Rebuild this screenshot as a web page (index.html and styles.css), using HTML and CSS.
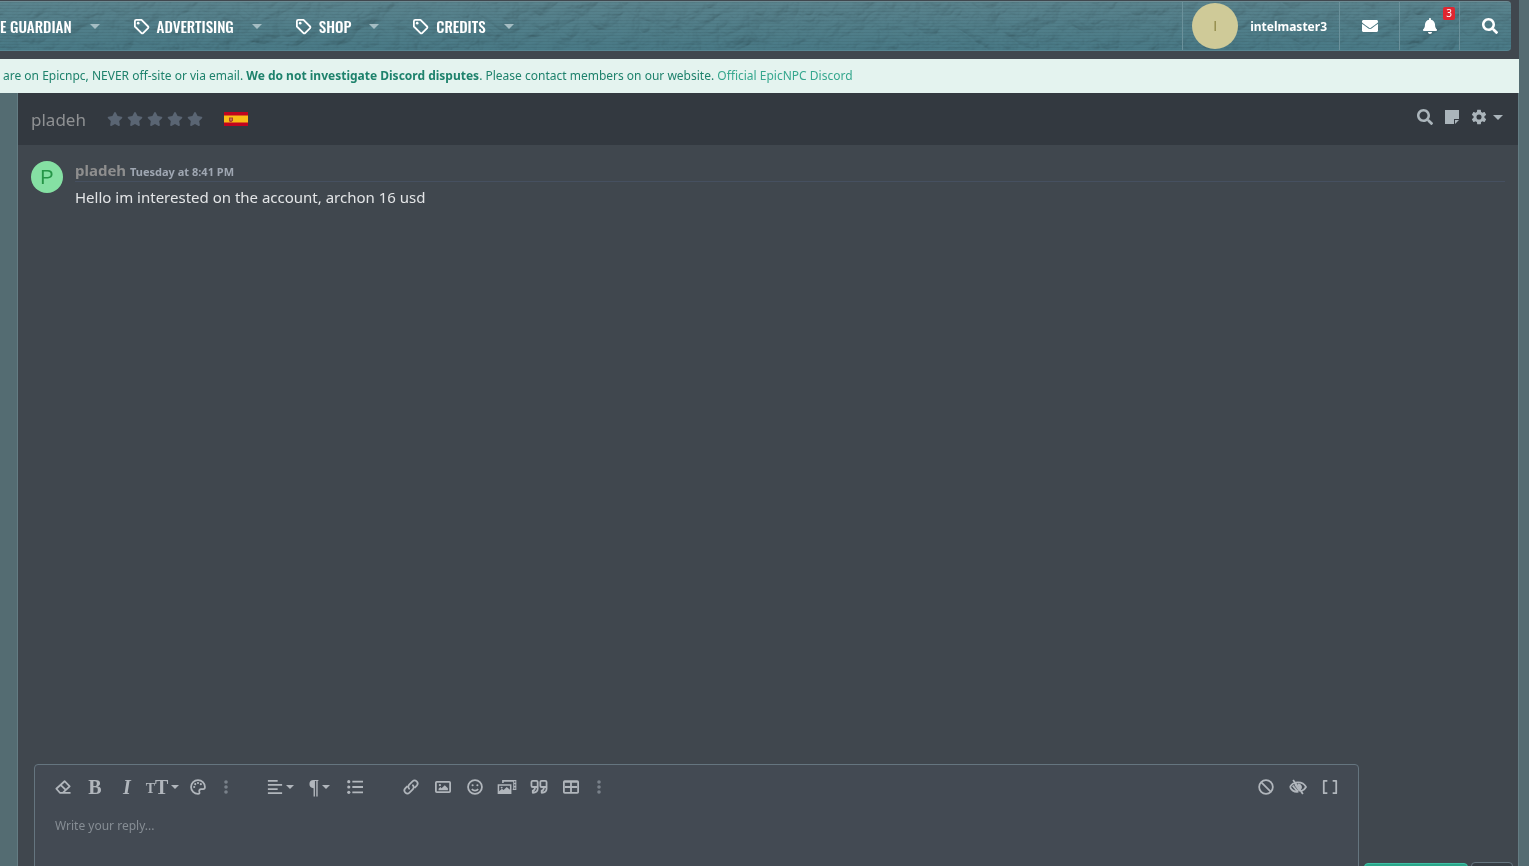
FILE: index.html
```html
<!DOCTYPE html>
<html lang="en">
<head>
    <meta charset="UTF-8">
    <meta name="viewport" content="width=device-width, initial-scale=1.0">
    <title>Conversation with pladeh | EpicNPC</title>
    <link rel="stylesheet" href="styles.css">
</head>
<body>
    <svg class="sprite" aria-hidden="true">
        <symbol id="tag" viewBox="0 0 18 18"><path d="M2 3.500A1.500 1.500 0 0 1 3.500 2H9l7 7a1.200 1.200 0 0 1 0 1.700L10.700 16a1.200 1.200 0 0 1-1.700 0L2 9z" fill="none" stroke="currentColor" stroke-width="1.900" stroke-linejoin="round"/><circle cx="5.500" cy="5.500" r="1.400"/></symbol>
        <symbol id="search" viewBox="0 0 512 512"><path d="M505 442.700L405.300 343c-4.500-4.500-10.600-7-17-7H372c27.600-35.300 44-79.700 44-128C416 93.100 322.900 0 208 0S0 93.100 0 208s93.100 208 208 208c48.300 0 92.700-16.400 128-44v16.300c0 6.400 2.500 12.500 7 17l99.700 99.700c9.400 9.400 24.600 9.400 33.900 0l28.300-28.300c9.400-9.400 9.400-24.600.1-34zM208 336c-70.700 0-128-57.200-128-128 0-70.700 57.200-128 128-128 70.700 0 128 57.200 128 128 0 70.700-57.200 128-128 128z"/></symbol>
        <symbol id="star" viewBox="0 0 576 512"><path d="M259.300 17.800L194 150.200 47.900 171.500c-26.200 3.800-36.700 36.100-17.700 54.600l105.700 103-25 145.500c-4.500 26.300 23.200 46 46.400 33.700L288 439.600l130.700 68.700c23.200 12.200 50.900-7.400 46.400-33.700l-25-145.500 105.700-103c19-18.500 8.500-50.800-17.700-54.600L382 150.200 316.700 17.800c-11.700-23.600-45.600-23.900-57.400 0z"/></symbol>
        <symbol id="dots" viewBox="0 0 4 14"><circle cx="2" cy="2" r="1.800"/><circle cx="2" cy="7" r="1.800"/><circle cx="2" cy="12" r="1.800"/></symbol>
    </svg>

    <div class="site">
        <header class="header">
            <div class="navbar">
                <svg class="navbar-texture" aria-hidden="true">
                    <filter id="stone" x="0" y="0" width="100%" height="100%">
                        <feTurbulence type="turbulence" baseFrequency="0.025 0.035" numOctaves="4" seed="8"/>
                        <feDiffuseLighting lighting-color="#ffffff" surfaceScale="6"><feDistantLight azimuth="240" elevation="60"/></feDiffuseLighting>
                    </filter>
                    <rect width="100%" height="100%" filter="url(#stone)"/>
                </svg>
                <nav class="nav">
                    <a href="#guardian" class="nav-link">E GUARDIAN</a><button class="nav-toggle" aria-label="More guardian links"><i class="caret"></i></button>
                    <a href="#advertising" class="nav-link"><svg><use href="#tag"/></svg>ADVERTISING</a><button class="nav-toggle" aria-label="More advertising links"><i class="caret"></i></button>
                    <a href="#shop" class="nav-link"><svg><use href="#tag"/></svg>SHOP</a><button class="nav-toggle" aria-label="More shop links"><i class="caret"></i></button>
                    <a href="#credits" class="nav-link"><svg><use href="#tag"/></svg>CREDITS</a><button class="nav-toggle" aria-label="More credits links"><i class="caret"></i></button>
                </nav>
                <div class="account">
                    <a href="#account" class="account-user"><span class="avatar avatar-user">I</span>intelmaster3</a>
                    <a href="#inbox" class="account-link" aria-label="Inbox"><svg viewBox="0 0 512 512"><path d="M502.300 190.800c3.900-3.100 9.700-.2 9.700 4.700V400c0 26.500-21.500 48-48 48H48c-26.500 0-48-21.500-48-48V195.600c0-5 5.700-7.800 9.700-4.700 22.400 17.400 52.100 39.500 154.100 113.600 21.100 15.400 56.700 47.800 92.200 47.600 35.700.3 72-32.800 92.300-47.600 102-74.100 131.600-96.300 154-113.700zM256 320c23.200.4 56.600-29.200 73.400-41.400 132.700-96.300 142.800-104.700 173.400-128.700 5.800-4.500 9.200-11.500 9.200-18.900v-19c0-26.500-21.500-48-48-48H48c-26.500 0-48 21.500-48 48v19c0 7.400 3.400 14.300 9.200 18.900 30.600 23.900 40.700 32.400 173.400 128.700 16.800 12.200 50.200 41.800 73.400 41.400z"/></svg></a>
                    <a href="#alerts" class="account-link" aria-label="Alerts"><svg viewBox="0 0 448 512"><path d="M224 512c35.320 0 63.970-28.650 63.970-64H160.030c0 35.350 28.650 64 63.970 64zm215.390-149.710c-19.320-20.760-55.470-51.990-55.470-154.290 0-77.700-54.480-139.900-127.940-155.160V32c0-17.670-14.320-32-31.980-32s-31.980 14.330-31.980 32v20.840C118.560 68.100 64.080 130.300 64.080 208c0 102.300-36.150 133.530-55.470 154.290-6 6.450-8.660 14.160-8.610 21.710.11 16.400 12.980 32 32.100 32h383.800c19.120 0 32-15.600 32.100-32 .05-7.550-2.610-15.270-8.610-21.710z"/></svg><span class="badge">3</span></a>
                    <a href="#search" class="account-link account-search" aria-label="Search"><svg><use href="#search"/></svg></a>
                </div>
            </div>
        </header>

        <div class="notice">are on Epicnpc, NEVER off-site or via email. <strong>We do not investigate Discord disputes</strong>. Please contact members on our website. <a href="#discord">Official EpicNPC Discord</a></div>

        <main class="chat">
            <div class="chat-header">
                <h1>pladeh</h1>
                <div class="stars" role="img" aria-label="No rating">
                    <svg><use href="#star"/></svg>
                    <svg><use href="#star"/></svg>
                    <svg><use href="#star"/></svg>
                    <svg><use href="#star"/></svg>
                    <svg><use href="#star"/></svg>
                </div>
                <svg class="flag" viewBox="0 0 24 14" role="img" aria-label="Spain"><path fill="#c0041f" d="M0 0h24v14H0z"/><path fill="#f9bc16" d="M0 3.500h24v7H0z"/><path fill="#a8402b" d="M5 5.500h4v3L7.500 10H6L5 9z"/><path fill="#e5a98a" d="M6.500 6.500h1v2h-1z"/></svg>
                <div class="chat-tools">
                    <button aria-label="Search conversation"><svg><use href="#search"/></svg></button>
                    <button aria-label="Notes"><svg viewBox="0 0 16 16"><path d="M1 1h14v9h-5v5H1zM11 11h4l-4 4z"/></svg></button>
                    <button aria-label="Settings"><svg viewBox="1 1 22 22"><path d="M12,15.500A3.500,3.500 0 0,1 8.500,12A3.500,3.500 0 0,1 12,8.500A3.500,3.500 0 0,1 15.500,12A3.500,3.500 0 0,1 12,15.500M19.430,12.970C19.470,12.650 19.500,12.330 19.500,12C19.500,11.670 19.470,11.340 19.430,11L21.540,9.370C21.730,9.220 21.780,8.950 21.660,8.730L19.660,5.270C19.540,5.050 19.270,4.960 19.050,5.050L16.560,6.050C16.040,5.660 15.500,5.320 14.870,5.070L14.500,2.420C14.460,2.180 14.250,2 14,2H10C9.750,2 9.540,2.180 9.500,2.420L9.130,5.070C8.500,5.320 7.960,5.660 7.440,6.050L4.950,5.050C4.730,4.960 4.460,5.050 4.340,5.270L2.340,8.730C2.210,8.950 2.270,9.220 2.460,9.370L4.570,11C4.530,11.340 4.500,11.670 4.500,12C4.500,12.330 4.530,12.650 4.570,12.970L2.460,14.630C2.270,14.780 2.210,15.050 2.340,15.270L4.340,18.730C4.460,18.950 4.730,19.030 4.950,18.950L7.440,17.940C7.960,18.340 8.500,18.680 9.130,18.930L9.500,21.580C9.540,21.820 9.750,22 10,22H14C14.250,22 14.460,21.820 14.500,21.580L14.870,18.930C15.500,18.670 16.040,18.340 16.560,17.940L19.050,18.950C19.270,19.030 19.540,18.950 19.660,18.730L21.660,15.270C21.780,15.050 21.730,14.780 21.540,14.630L19.430,12.970Z"/></svg><i class="caret"></i></button>
                </div>
            </div>

            <div class="messages">
                <article class="message">
                    <span class="avatar">P</span>
                    <div class="message-main">
                        <div class="message-meta"><a href="#pladeh">pladeh</a> <time>Tuesday at 8:41 PM</time></div>
                        <p>Hello im interested on the account, archon 16 usd</p>
                    </div>
                </article>
            </div>

            <form class="reply">
                <div class="editor">
                    <div class="toolbar">
                        <div class="toolbar-group">
                            <button type="button" aria-label="Remove formatting"><svg viewBox="0 0 18 18" class="line"><path d="M5.500 15.500 1.500 11 10.800 2.500l5.700 5.700-7.800 7.300H5.500zM6.300 6.700l6 5.700M9 15.500h8.500"/></svg></button>
                            <button type="button" class="glyph" aria-label="Bold">B</button>
                            <button type="button" class="glyph glyph-italic" aria-label="Italic">I</button>
                            <button type="button" class="glyph wide" aria-label="Font size"><small>T</small>T<i class="caret"></i></button>
                            <button type="button" aria-label="Text color"><svg viewBox="0 0 18 18"><path class="line" d="M9 1.200a7.800 7.800 0 1 0 0 15.600c1.800 0 1.900-1.200 1.500-2.200-.5-1.600.3-3.200 2-3.200h2.300c1.200 0 2-1 2-2.400C16.800 4.700 13.300 1.200 9 1.200z"/><circle cx="4.700" cy="9" r="1.200"/><circle cx="5.900" cy="5.800" r="1.200"/><circle cx="9" cy="4.500" r="1.200"/><circle cx="12.200" cy="5.800" r="1.200"/></svg></button>
                            <button type="button" class="more" aria-label="More text options"><svg><use href="#dots"/></svg></button>
                        </div>
                        <div class="toolbar-group">
                            <button type="button" class="wide" aria-label="Alignment"><svg viewBox="0 0 18 18" class="line"><path d="M1 2h11M1 6.700h16M1 11.300h11M1 16h16"/></svg><i class="caret"></i></button>
                            <button type="button" class="glyph wide" aria-label="Paragraph format">¶<i class="caret"></i></button>
                            <button type="button" aria-label="List"><svg viewBox="0 0 18 18"><path class="line" d="M6 3h12M6 9h12M6 15h12"/><circle cx="2" cy="3" r="1.800"/><circle cx="2" cy="9" r="1.800"/><circle cx="2" cy="15" r="1.800"/></svg></button>
                        </div>
                        <div class="toolbar-group">
                            <button type="button" aria-label="Insert link"><svg viewBox="0 0 18 18" class="line"><path d="M7.500 11.500c-1.800-1.300-2-3.700-.5-5.200l3.700-3.700a3.400 3.400 0 0 1 4.800 4.800L13 10M10.500 6.500c1.800 1.300 2 3.700.5 5.200l-3.700 3.700a3.400 3.400 0 0 1-4.800-4.800L5 8"/></svg></button>
                            <button type="button" aria-label="Insert image"><svg viewBox="0 0 18 18"><rect class="line" x="1" y="3.300" width="16" height="11.500" rx="1"/><circle cx="5.500" cy="6.800" r="1.300"/><path d="M4 12.700v-1.700l2-2 1.400 1.400L11 7l3.500 3.500v2.200z"/></svg></button>
                            <button type="button" aria-label="Smilies"><svg viewBox="0 0 18 18"><circle class="line" cx="9" cy="9" r="7.800"/><circle cx="6.300" cy="7" r="1.200"/><circle cx="11.700" cy="7" r="1.200"/><path class="line" d="M5.500 11.200c1.700 2.400 5.300 2.400 7 0"/></svg></button>
                            <button type="button" aria-label="Media"><svg class="media" viewBox="0 0 21 18"><path fill-rule="evenodd" d="M5 1h16v11.500h-4V11h.5V3H6.800v1.500H5zm13.500 1.500v1.600h1.400V2.500zm0 3.500v1.600h1.400V6zm0 3.500v1.600h1.400V9.500z"/><path fill-rule="evenodd" d="M0 6h15.500v11H0zm1.700 1.700v6l3-2.700 2 1.500 3.500-3.500 3.600 3.100V7.700z"/><circle cx="4.500" cy="9.700" r="1.100"/></svg></button>
                            <button type="button" aria-label="Quote"><svg class="media line" viewBox="0 0 21 18"><path d="M9 9H3.500A1.500 1.500 0 0 1 2 7.500v-4A1.500 1.500 0 0 1 3.500 2h4A1.500 1.500 0 0 1 9 3.500V11q0 4-5.500 4.500V13Q6 13 6 9M19 9h-5.500A1.500 1.500 0 0 1 12 7.500v-4A1.500 1.500 0 0 1 13.500 2h4A1.500 1.500 0 0 1 19 3.500V11q0 4-5.500 4.500V13Q16 13 16 9"/></svg></button>
                            <button type="button" aria-label="Insert table"><svg viewBox="0 0 18 18" class="line"><rect x="1" y="2.300" width="16" height="13.400" rx="1"/><path d="M1.500 3.300h15M9 3v12M2 9h14"/></svg></button>
                            <button type="button" class="more" aria-label="More insert options"><svg><use href="#dots"/></svg></button>
                        </div>
                        <div class="toolbar-group toolbar-end">
                            <button type="button" aria-label="Discard draft"><svg viewBox="0 0 18 18" class="line"><circle cx="9" cy="9" r="7.700"/><path d="m3.800 3.800 10.400 10.400"/></svg></button>
                            <button type="button" aria-label="Toggle preview"><svg class="media line" viewBox="0 0 21 18"><path d="M1.500 9C5 2 16 2 19.500 9 18.300 11.300 16.300 13 14 13.700M1.500 9C3.500 13 7 15 11 14.300M7 6l5.500 7.500M4.500 7.500l5.500 6.500M5 1l11 16"/><path d="M11 6a3.200 3.200 0 0 1 2 5.500z"/></svg></button>
                            <button type="button" aria-label="Toggle BB code"><svg viewBox="0 0 18 18" class="line"><path d="M6 2H2v14h4M12 2h4v14h-4"/></svg></button>
                        </div>
                    </div>
                    <textarea aria-label="Write your reply" placeholder="Write your reply..."></textarea>
                </div>
                <div class="reply-actions">
                    <button type="submit" class="send" aria-label="Post reply"></button>
                    <button type="button" class="options" aria-label="Reply options"></button>
                </div>
            </form>
        </main>
    </div>
</body>
</html>
```
FILE: styles.css
```css
* {
    margin: 0;
    padding: 0;
    box-sizing: border-box;
}

body {
    font-family: 'Noto Sans', 'Segoe UI', sans-serif;
    font-size: 15px;
    color: #e3e5e7;
    background: #546c72;
    overflow: hidden;
}

a {
    color: inherit;
    text-decoration: none;
}

button {
    font: inherit;
    color: inherit;
    background: none;
    border: 0;
    cursor: pointer;
}

svg {
    fill: currentColor;
    flex: none;
}

.sprite {
    display: none;
}

.line {
    fill: none;
    stroke: currentColor;
    stroke-width: 2;
    stroke-linejoin: round;
}

.caret {
    border: 5px solid transparent;
    border-top-color: currentColor;
    border-bottom: 0;
}

.site {
    display: flex;
    flex-direction: column;
    height: 100vh;
    margin-right: 10px;
}

/* top bar */
.header {
    padding: 1px 8px 8px 0;
    background: #40474e;
}

.navbar {
    position: relative;
    display: flex;
    justify-content: space-between;
    height: 50px;
    overflow: hidden;
    border-top: 1px solid #6d8c94;
    border-bottom: 1px solid #568591;
    border-radius: 0 4px 4px 0;
    background: repeating-linear-gradient(rgba(0,0,0,0.06) 0 1px, transparent 1px 3px), linear-gradient(#5a848e, #497a87);
    color: #fff;
}

.navbar-texture {
    position: absolute;
    inset: 0;
    width: 100%;
    height: 100%;
    opacity: 0.3;
    mix-blend-mode: multiply;
}

.nav, .account {
    position: relative;
    display: flex;
}

.nav-link {
    display: flex;
    align-items: center;
    gap: 7px;
    font-family: 'Oswald', 'Liberation Sans Narrow', 'Liberation Sans', sans-serif;
    font-size: 15px;
    font-weight: 500;
    line-height: 22px;
}

.nav-link svg {
    width: 17px;
    height: 17px;
}

.nav-toggle {
    display: flex;
    align-items: center;
    justify-content: center;
    width: 46px;
    margin-right: 15px;
    color: #a5bdc3;
}

.account-user, .account-link {
    display: flex;
    align-items: center;
    border-left: 1px solid #6b919b;
}

.account-user {
    gap: 12px;
    padding: 0 12px 0 9px;
    font-size: 12px;
    font-weight: 700;
}

.account-link {
    position: relative;
    justify-content: center;
    width: 60px;
}

.account-link svg {
    width: 16px;
    height: 16px;
}

.account-search {
    width: 52px;
    padding-left: 8px;
}

.badge {
    position: absolute;
    top: 5px;
    right: 4px;
    padding: 0 3px;
    border-radius: 2px;
    background: #e02630;
    font-size: 10px;
    line-height: 13px;
}

.avatar {
    display: flex;
    align-items: center;
    justify-content: center;
    flex: none;
    width: 32px;
    height: 32px;
    border-radius: 50%;
    background: #85e0a3;
    color: #259547;
    font-family: 'Liberation Sans', sans-serif;
    font-size: 20px;
}

.avatar-user {
    width: 46px;
    height: 46px;
    background: #cfca98;
    color: #8f8846;
    font-size: 14px;
    font-weight: 400;
}

.notice {
    padding: 0 3px;
    background: #e4f3ef;
    color: #1e826c;
    font-size: 12px;
    line-height: 34px;
    white-space: nowrap;
}

.notice a {
    color: #35a78e;
}

/* conversation */
.chat {
    display: flex;
    flex: 1;
    flex-direction: column;
    min-height: 0;
    margin-left: 17px;
    border: solid #647c83;
    border-width: 0 1px;
    background: #40474e;
}

.chat-header {
    display: flex;
    align-items: center;
    height: 52px;
    padding: 0 15px 0 13px;
    background: #333940;
    color: #8f9193;
}

.chat-header h1 {
    font-size: 17px;
    font-weight: 400;
}

.stars {
    display: flex;
    gap: 4px;
    margin: 0 21px;
    color: #5a6573;
}

.stars svg {
    width: 16px;
    height: 14px;
}

.flag {
    width: 24px;
    height: 14px;
}

.chat-tools {
    display: flex;
    gap: 11px;
    margin-left: auto;
    padding-bottom: 4px;
    color: #abb5bb;
}

.chat-tools button {
    display: flex;
    align-items: center;
    gap: 6px;
}

.chat-tools svg {
    width: 16px;
    height: 16px;
}

.messages {
    flex: 1;
    min-height: 0;
    padding: 16px 13px;
}

.message {
    display: flex;
    gap: 12px;
}

.message-main {
    flex: 1;
}

.message-meta {
    border-bottom: 1px solid #465060;
    color: #8e8e8e;
    font-weight: 700;
    line-height: 18px;
}

.message-meta time {
    color: #9fa7b2;
    font-size: 11px;
}

.message p {
    line-height: 30px;
}

/* reply box */
.reply {
    display: flex;
    flex: 0 0 102px;
    gap: 5px;
    padding: 0 5px 0 16px;
    overflow: hidden;
}

.editor {
    flex: 1;
    height: 160px;
    border: 1px solid #65757f;
    border-radius: 4px;
    background: #434a53;
}

.toolbar {
    display: flex;
    gap: 24px;
    padding: 6px 12px 0 12px;
    color: #b1b6bc;
}

.toolbar-group {
    display: flex;
}

.toolbar-end {
    margin-left: auto;
}

.toolbar button {
    display: flex;
    align-items: center;
    justify-content: center;
    width: 32px;
    height: 32px;
}

.toolbar svg {
    width: 16px;
    height: 16px;
}

.toolbar .media {
    width: 20px;
}

.toolbar .caret {
    border-width: 4px;
    border-bottom: 0;
    margin-left: 3px;
}

.toolbar .wide {
    width: 39px;
}

.toolbar .glyph {
    font-family: 'Liberation Serif', serif;
    font-size: 20px;
    font-weight: 700;
}

.toolbar .glyph-italic {
    font-style: italic;
}

.toolbar .glyph small {
    padding-top: 4px;
    font-size: 14px;
}

.toolbar .more {
    width: 23px;
    color: #79818a;
}

.toolbar .more svg {
    height: 14px;
}

.editor textarea {
    display: block;
    width: 100%;
    height: 110px;
    padding: 12px 20px;
    border: 0;
    outline: 0;
    resize: none;
    background: none;
    color: #e3e5e7;
    font: 12px/22px 'Noto Sans', 'Segoe UI', sans-serif;
}

.editor textarea::placeholder {
    color: #868d94;
}

.reply-actions {
    display: flex;
    align-items: flex-start;
    gap: 3px;
    padding-top: 98px;
}

.reply-actions button {
    height: 32px;
    border: 1px solid #65757f;
    border-radius: 4px;
}

.reply-actions .send {
    width: 104px;
    margin-top: 1px;
    border-color: #3fc1a5;
    background: #2aa68a;
}

.reply-actions .options {
    width: 42px;
    background: #363d44;
}
```
